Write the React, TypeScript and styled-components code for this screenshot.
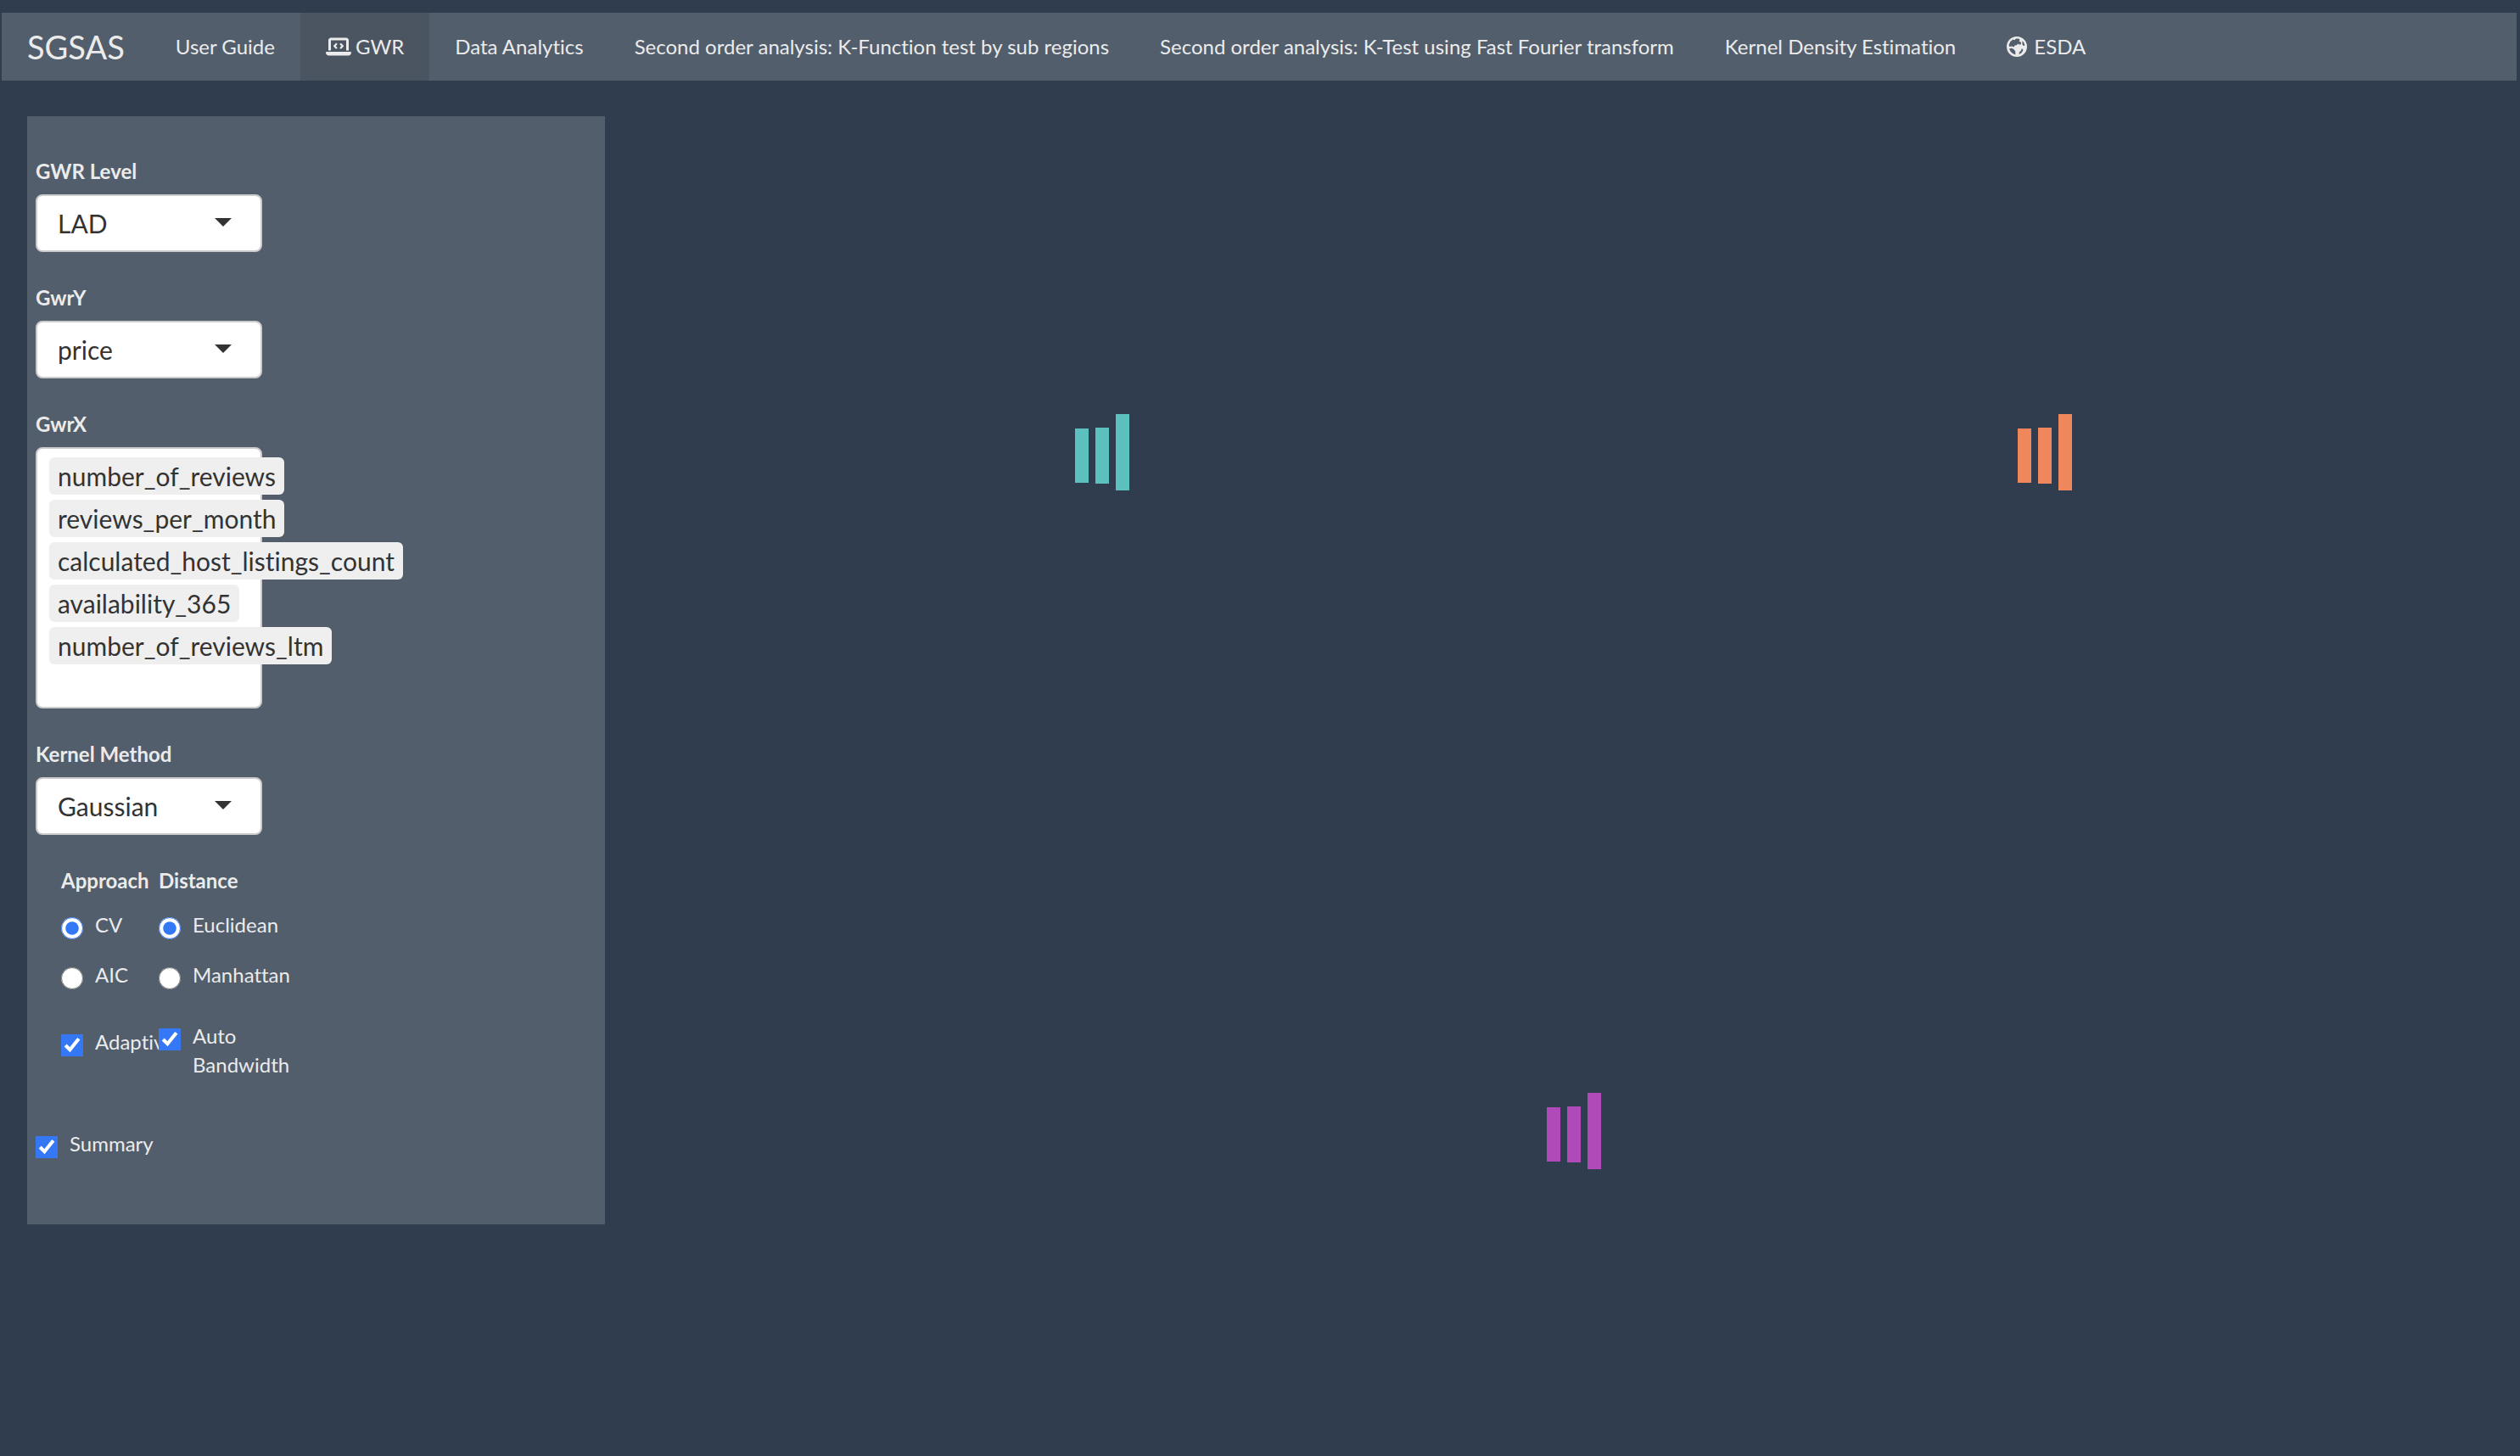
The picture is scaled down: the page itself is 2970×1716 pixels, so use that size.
import React from 'react';
import styled, { createGlobalStyle } from 'styled-components';
import { FaLaptopCode } from 'react-icons/fa6';

const GlobalStyle = createGlobalStyle`
  *, *::before, *::after { box-sizing: border-box; }
  body {
    margin: 0;
    padding: 15px 4px 0 2px;
    background: #303d4e;
    color: #ebebeb;
    font-family: Lato, "Liberation Sans", sans-serif;
    font-size: 24px;
    font-variant-ligatures: none;
    line-height: 34px;
  }
`;

const Navbar = styled.nav`
  display: flex;
  align-items: stretch;
  min-height: 80px;
  margin-bottom: 42px;
  background: #525e6b;
`;

const Brand = styled.a`
  display: flex;
  align-items: center;
  padding: 0 30px;
  color: inherit;
  font-size: 38px;
  text-decoration: none;
`;

const NavList = styled.ul`
  display: flex;
  margin: 0;
  padding: 0;
  list-style: none;
`;

const NavLink = styled.a<{ $active?: boolean }>`
  display: flex;
  align-items: center;
  height: 100%;
  padding: 0 30px;
  background: ${(p) => (p.$active ? '#4b5561' : 'transparent')};
  color: inherit;
  text-decoration: none;
  white-space: nowrap;
`;

const LaptopIcon = styled(FaLaptopCode)`
  width: 30px;
  height: 24px;
  margin-right: 5px;
`;

const GlobeSvg = styled.svg`
  width: 24px;
  height: 24px;
  margin-right: 8px;
`;

const Layout = styled.div`
  display: grid;
  grid-template-columns: 1fr 3fr;
  align-items: start;
`;

const Sidebar = styled.form`
  display: flex;
  flex-direction: column;
  gap: 37px;
  margin: 0 30px;
  padding: 48px 10px 78px;
  background: #525e6b;
`;

const Field = styled.div`
  display: flex;
  flex-direction: column;
  align-items: flex-start;
  gap: 10px;
`;

const FieldLabel = styled.label`
  font-weight: 700;
`;

const SelectBox = styled.div`
  position: relative;
  width: 267px;

  &::after {
    content: '';
    position: absolute;
    top: 28px;
    right: 36px;
    border: 10px solid transparent;
    border-top-color: #333;
    border-bottom-width: 0;
    pointer-events: none;
  }
`;

const Select = styled.select`
  display: block;
  width: 100%;
  height: 68px;
  padding: 0 24px;
  appearance: none;
  border: 2px solid #ccc;
  border-radius: 8px;
  background: #fff;
  color: #333;
  font: inherit;
  font-size: 30px;
`;

const TagBox = styled.div`
  display: flex;
  flex-direction: column;
  gap: 6px;
  width: 267px;
  padding: 10px 14px 0;
  border: 2px solid #ccc;
  border-radius: 8px;
  background: #fff;
  color: #333;
  font-size: 30px;
`;

const Tag = styled.span`
  width: max-content;
  padding: 0 10px;
  border-radius: 6px;
  background: #efefef;
  line-height: 44px;
`;

const TagInput = styled.input`
  width: 100%;
  height: 44px;
  padding: 0;
  border: 0;
  outline: 0;
  background: transparent;
  color: inherit;
  font: inherit;
`;

const Columns = styled.div`
  display: flex;
  align-items: flex-start;
  margin: 0 30px 22px;
`;

const Column = styled.div<{ $width: number; $gap: number }>`
  display: flex;
  flex: none;
  flex-direction: column;
  gap: ${(p) => p.$gap}px;
  width: ${(p) => p.$width}px;
`;

const RadioGroup = styled.fieldset`
  display: flex;
  flex-direction: column;
  gap: 25px;
  min-width: 0;
  margin: 0;
  padding: 0;
  border: 0;
`;

const Legend = styled.legend`
  margin-bottom: 18px;
  padding: 0;
  font-weight: 700;
`;

const Option = styled.label`
  display: flex;
  align-items: flex-start;
  gap: 14px;
`;

const Tick = styled.input`
  flex: none;
  width: 26px;
  height: 26px;
  margin: 8px 0 0;
  accent-color: #3478f6;
`;

const Outputs = styled.main`
  display: grid;
  grid-template-columns: 1fr 1fr;
  row-gap: 359px;
`;

const Output = styled.section<{ $wide?: boolean }>`
  display: flex;
  justify-content: center;
  grid-column: ${(p) => (p.$wide ? '1 / -1' : 'auto')};
  padding-top: 351px;
`;

const Loader = styled.div<{ $color: string }>`
  display: flex;
  align-items: flex-end;
  gap: 8px;
  height: 90px;
  color: ${(p) => p.$color};
`;

const Bar = styled.span<{ $height: number; $lift: number }>`
  width: 16px;
  height: ${(p) => p.$height}px;
  margin-bottom: ${(p) => p.$lift}px;
  background: currentColor;
`;

function GlobeIcon() {
  return (
    <GlobeSvg viewBox="0 0 24 24" aria-hidden="true">
      <path
        fill="currentColor"
        fillRule="evenodd"
        d="M12 0a12 12 0 1 1 0 24a12 12 0 0 1 0-24zM11 2.6L14 2.4L15.6 4L14.6 6L16.8 6.6L17 9.2L14.6 9.4L13.2 8.4L11.8 10.2L9.4 10.6L8.6 12.4L6 11.4L3.2 12L2.6 10L4.4 6L7.4 3.6L9.4 4.2zM18.6 5L20.4 7.4L21.4 10.6L19.6 11L18.4 9zM3 14.4L5.8 13.8L8.6 15.2L10.2 17.4L10.4 21.4L7 20L4.4 17.4zM14.6 21L14.8 18.8L17 16.6L17.6 14.6L19.4 15L18.8 17.6L17 19.8z"
      />
    </GlobeSvg>
  );
}

const links = [
  { text: 'User Guide' },
  { text: 'GWR', icon: <LaptopIcon />, active: true },
  { text: 'Data Analytics' },
  { text: 'Second order analysis: K-Function test by sub regions' },
  { text: 'Second order analysis: K-Test using Fast Fourier transform' },
  { text: 'Kernel Density Estimation' },
  { text: 'ESDA', icon: <GlobeIcon /> },
];

const variables = [
  'number_of_reviews',
  'reviews_per_month',
  'calculated_host_listings_count',
  'availability_365',
  'number_of_reviews_ltm',
];

function SelectField({ id, label, options }: { id: string; label: string; options: string[] }) {
  return (
    <Field>
      <FieldLabel htmlFor={id}>{label}</FieldLabel>
      <SelectBox>
        <Select id={id} defaultValue={options[0]}>
          {options.map((o) => (
            <option key={o}>{o}</option>
          ))}
        </Select>
      </SelectBox>
    </Field>
  );
}

function Radios({ name, title, options }: { name: string; title: string; options: string[] }) {
  return (
    <RadioGroup>
      <Legend>{title}</Legend>
      {options.map((o, i) => (
        <Option key={o}>
          <Tick type="radio" name={name} value={o} defaultChecked={i === 0} />
          {o}
        </Option>
      ))}
    </RadioGroup>
  );
}

function Check({ label }: { label: string }) {
  return (
    <Option>
      <Tick type="checkbox" defaultChecked />
      {label}
    </Option>
  );
}

function Spinner({ color }: { color: string }) {
  return (
    <Loader $color={color} role="status" aria-label="Loading">
      <Bar $height={64} $lift={9} />
      <Bar $height={66} $lift={8} />
      <Bar $height={90} $lift={0} />
    </Loader>
  );
}

export default function App() {
  return (
    <>
      <GlobalStyle />
      <Navbar>
        <Brand href="#">SGSAS</Brand>
        <NavList>
          {links.map((l) => (
            <li key={l.text}>
              <NavLink href="#" $active={l.active}>
                {l.icon}
                {l.text}
              </NavLink>
            </li>
          ))}
        </NavList>
      </Navbar>
      <Layout>
        <Sidebar>
          <SelectField id="level" label="GWR Level" options={['LAD']} />
          <SelectField id="gwr-y" label="GwrY" options={['price']} />
          <Field>
            <FieldLabel htmlFor="gwr-x">GwrX</FieldLabel>
            <TagBox>
              {variables.map((v) => (
                <Tag key={v}>{v}</Tag>
              ))}
              <TagInput id="gwr-x" type="text" />
            </TagBox>
          </Field>
          <SelectField id="kernel" label="Kernel Method" options={['Gaussian']} />
          <Columns>
            <Column $width={115} $gap={45}>
              <Radios name="approach" title="Approach" options={['CV', 'AIC']} />
              <Check label="Adaptive" />
            </Column>
            <Column $width={160} $gap={38}>
              <Radios name="distance" title="Distance" options={['Euclidean', 'Manhattan']} />
              <Check label="Auto Bandwidth" />
            </Column>
          </Columns>
          <Check label="Summary" />
        </Sidebar>
        <Outputs>
          <Output>
            <Spinner color="#5bc0be" />
          </Output>
          <Output>
            <Spinner color="#f0875c" />
          </Output>
          <Output $wide>
            <Spinner color="#b04ab8" />
          </Output>
        </Outputs>
      </Layout>
    </>
  );
}
